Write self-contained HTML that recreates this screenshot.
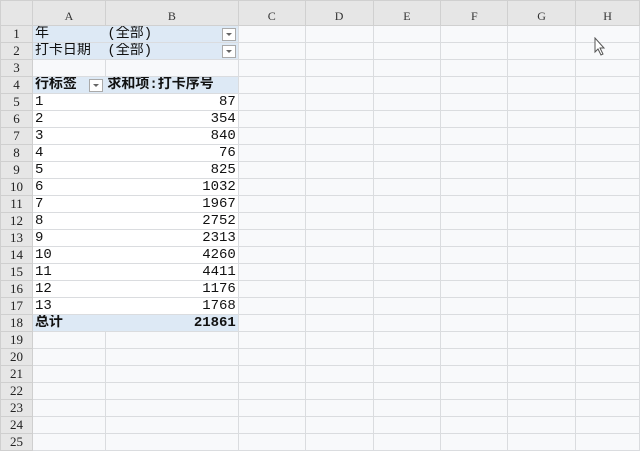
<!DOCTYPE html><html><head><meta charset="utf-8"><style>
body{margin:0;width:640px;height:449px;overflow:hidden;background:#f8f9fb;}
table{border-collapse:collapse;table-layout:fixed;position:absolute;left:0;top:0;}
td{height:16px;padding:0 2px;border:1px solid #dadcdf;font-size:14px;line-height:16px;white-space:nowrap;overflow:hidden;color:#111;font-family:"Liberation Mono","Noto Sans CJK SC",monospace;}
tr.h td{height:24px;background:#e6e6e6;text-align:center;font-family:"Liberation Serif",serif;font-size:12px;color:#333;border-color:#d0d0d0;vertical-align:bottom;line-height:18px}
td.r{background:#e6e6e6;text-align:center;font-family:"Liberation Serif",serif;font-size:13px;color:#222;border-color:#cfcfcf;padding:0}
.b{background:#dde9f5}
.n{text-align:right}
.nr{border-right-style:hidden}
.w{background:#fff}
.dd{float:right;width:12px;height:11px;margin-top:2px;border:1px solid #aaa;background:#fff;position:relative}
.dd:after{content:"";position:absolute;left:3px;top:4px;border:3px solid transparent;border-top:3px solid #666}
.bold{font-weight:bold}
</style></head><body>
<table>
<colgroup><col style="width:32px"><col style="width:73px"><col style="width:133px"><col style="width:67px"><col style="width:68px"><col style="width:68px"><col style="width:67px"><col style="width:68px"><col style="width:64px"></colgroup>
<tr class="h"><td></td><td>A</td><td>B</td><td>C</td><td>D</td><td>E</td><td>F</td><td>G</td><td>H</td></tr>
<tr><td class="r">1</td><td class="b nr">年</td><td class="b">(全部)<span class="dd"></span></td><td></td><td></td><td></td><td></td><td></td><td></td></tr>
<tr><td class="r">2</td><td class="b nr">打卡日期</td><td class="b">(全部)<span class="dd"></span></td><td></td><td></td><td></td><td></td><td></td><td></td></tr>
<tr><td class="r">3</td><td></td><td></td><td></td><td></td><td></td><td></td><td></td><td></td></tr>
<tr><td class="r">4</td><td class="b nr bold">行标签<span class="dd"></span></td><td class="b bold">求和项:打卡序号</td><td></td><td></td><td></td><td></td><td></td><td></td></tr>
<tr><td class="r">5</td><td class="nr w">1</td><td class="n w">87</td><td></td><td></td><td></td><td></td><td></td><td></td></tr>
<tr><td class="r">6</td><td class="nr w">2</td><td class="n w">354</td><td></td><td></td><td></td><td></td><td></td><td></td></tr>
<tr><td class="r">7</td><td class="nr w">3</td><td class="n w">840</td><td></td><td></td><td></td><td></td><td></td><td></td></tr>
<tr><td class="r">8</td><td class="nr w">4</td><td class="n w">76</td><td></td><td></td><td></td><td></td><td></td><td></td></tr>
<tr><td class="r">9</td><td class="nr w">5</td><td class="n w">825</td><td></td><td></td><td></td><td></td><td></td><td></td></tr>
<tr><td class="r">10</td><td class="nr w">6</td><td class="n w">1032</td><td></td><td></td><td></td><td></td><td></td><td></td></tr>
<tr><td class="r">11</td><td class="nr w">7</td><td class="n w">1967</td><td></td><td></td><td></td><td></td><td></td><td></td></tr>
<tr><td class="r">12</td><td class="nr w">8</td><td class="n w">2752</td><td></td><td></td><td></td><td></td><td></td><td></td></tr>
<tr><td class="r">13</td><td class="nr w">9</td><td class="n w">2313</td><td></td><td></td><td></td><td></td><td></td><td></td></tr>
<tr><td class="r">14</td><td class="nr w">10</td><td class="n w">4260</td><td></td><td></td><td></td><td></td><td></td><td></td></tr>
<tr><td class="r">15</td><td class="nr w">11</td><td class="n w">4411</td><td></td><td></td><td></td><td></td><td></td><td></td></tr>
<tr><td class="r">16</td><td class="nr w">12</td><td class="n w">1176</td><td></td><td></td><td></td><td></td><td></td><td></td></tr>
<tr><td class="r">17</td><td class="nr w">13</td><td class="n w">1768</td><td></td><td></td><td></td><td></td><td></td><td></td></tr>
<tr><td class="r">18</td><td class="b nr bold" style="border-top:1px solid #9cc2e5">总计</td><td class="b n bold" style="border-top:1px solid #9cc2e5">21861</td><td></td><td></td><td></td><td></td><td></td><td></td></tr>
<tr><td class="r">19</td><td></td><td></td><td></td><td></td><td></td><td></td><td></td><td></td></tr>
<tr><td class="r">20</td><td></td><td></td><td></td><td></td><td></td><td></td><td></td><td></td></tr>
<tr><td class="r">21</td><td></td><td></td><td></td><td></td><td></td><td></td><td></td><td></td></tr>
<tr><td class="r">22</td><td></td><td></td><td></td><td></td><td></td><td></td><td></td><td></td></tr>
<tr><td class="r">23</td><td></td><td></td><td></td><td></td><td></td><td></td><td></td><td></td></tr>
<tr><td class="r">24</td><td></td><td></td><td></td><td></td><td></td><td></td><td></td><td></td></tr>
<tr><td class="r">25</td><td></td><td></td><td></td><td></td><td></td><td></td><td></td><td></td></tr>
</table>
<svg style="position:absolute;left:594px;top:37px" width="12" height="20" viewBox="0 0 12 20"><path d="M1 1 L1 15 L4 12 L7 18 L9 17 L6 11 L10 11 Z" fill="#fff" stroke="#555" stroke-width="1"/></svg>
</body></html>
